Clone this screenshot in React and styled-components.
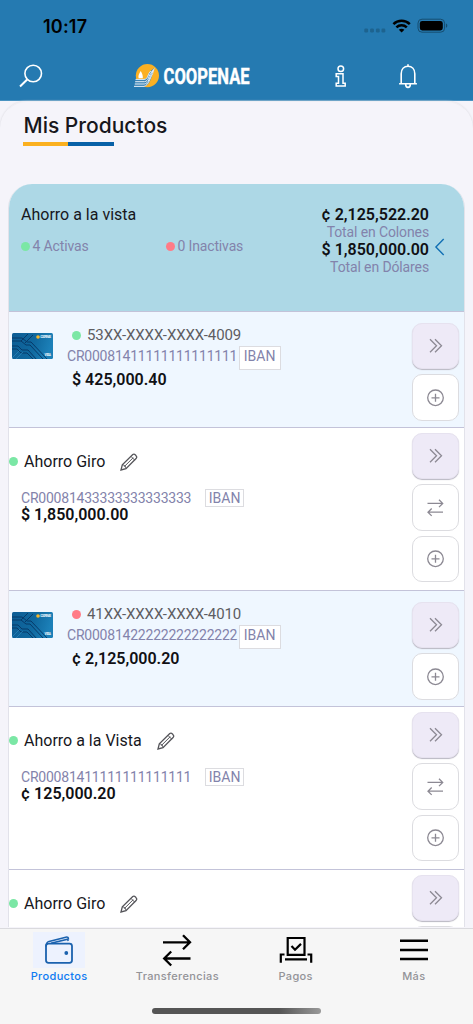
import React, { Fragment } from "react";
import styled, { createGlobalStyle } from "styled-components";

const GlobalStyle = createGlobalStyle`
  * {
    box-sizing: border-box;
  }

  body {
    margin: 0;
    background: #f5f4fa;
    font-family: Roboto, "Liberation Sans", sans-serif;
  }

  svg {
    display: block;
    flex: none;
    overflow: visible;
  }
`;

const Screen = styled.div`
  display: flex;
  flex-direction: column;
  width: 473px;
  height: 1024px;
  overflow: hidden;
  background: #f5f4fa;
`;

const Header = styled.header`
  flex: none;
  height: 101px;
  background: #257ab1;
  border-bottom: 1px solid #4a93c1;
`;

const StatusBar = styled.div`
  display: flex;
  align-items: center;
  justify-content: space-between;
  height: 52px;
  padding: 0 25px 0 43px;
`;

const Clock = styled.span`
  font-family: Inter, sans-serif;
  font-size: 18px;
  font-weight: 600;
  letter-spacing: 0.2px;
  color: #000;
`;

const StatusIcons = styled.div`
  display: flex;
  align-items: center;
`;

const NavBar = styled.div`
  display: grid;
  grid-template-columns: 134px 181px 51px 1fr;
  align-items: center;
  height: 48px;
`;

const NavItem = styled.div`
  padding-left: ${props => props.$left || 0}px;
`;

const Main = styled.main`
  flex: 1;
  min-height: 0;
  overflow: hidden;
  padding: 0 9px;
  border: 1px solid transparent;
  border-top-color: #f0eff4;
  border-radius: 27px 27px 0 0;
  box-shadow: 0 0 2px #d4d4da;
`;

const Title = styled.h1`
  margin: 0 0 0 13.5px;
  padding-top: 10px;
  font-family: Inter, sans-serif;
  font-size: 21px;
  font-weight: 500;
  line-height: 28px;
  color: #17171c;
`;

const Underline = styled.div`
  width: 91px;
  height: 3.5px;
  margin: 2px 0 38.5px 13px;
  background: linear-gradient(90deg, #fbb01f 50%, #0861a7 50%);
`;

const List = styled.section`
  width: 457px;
  margin-left: -2px;
  border: 1px solid #e2e2ea;
  border-top: 0;
  border-radius: 24px 24px 0 0;
  overflow: hidden;
  background: #fff;
`;

const Summary = styled.div`
  display: flex;
  height: 127px;
  padding: 20px 19px 0 12px;
  background: #add8e6;
`;

const SummaryInfo = styled.div`
  flex: 1;
`;

const Name = styled.div`
  font-size: 16px;
  line-height: 20px;
  color: #17171c;
`;

const SummaryName = styled(Name)`
  padding-top: 1px;
`;

const Counters = styled.div`
  display: grid;
  grid-template-columns: 145px 1fr;
  margin-top: 12px;
`;

const Counter = styled.div`
  display: flex;
  align-items: center;
  gap: 2.5px;
  font-size: 14px;
  line-height: 18px;
  letter-spacing: -0.15px;
  color: #8383ab;
`;

const Dot = styled.i`
  flex: none;
  width: 9px;
  height: 9px;
  border-radius: 50%;
  background: ${props => (props.$off ? "#ff7b87" : "#7be7a5")};
`;

const Totals = styled.div`
  padding-top: 1px;
  text-align: right;
`;

const Amount = styled.div`
  font-size: 16px;
  font-weight: 600;
  line-height: 19px;
  color: #101014;
`;

const TotalLabel = styled.div`
  font-size: 14px;
  line-height: 16px;
  letter-spacing: -0.12px;
  color: #8383ab;
`;

const Collapse = styled.div`
  padding: 34px 0 0 6px;
`;

const Row = styled.article`
  display: flex;
  justify-content: space-between;
  height: ${props => (props.$card ? 116 : 163)}px;
  padding-right: 5px;
  border-top: 1px solid #c3c3d9;
  background: ${props => (props.$card ? "#eff7ff" : "#fff")};
`;

const CardInfo = styled.div`
  display: flex;
  padding: 13px 0 0 3px;
`;

const CardPicture = styled.div`
  padding-top: 8px;
  width: 55px;
`;

const CardNumber = styled.div`
  display: flex;
  align-items: center;
  gap: 6px;
  padding: 1px 0 0 5px;
  font-size: 15px;
  line-height: 19px;
  letter-spacing: -0.1px;
  color: #5d5d62;
`;

const CardAmount = styled(Amount)`
  padding-left: 5px;
`;

const IbanLine = styled.div`
  display: flex;
  gap: ${props => props.$gap}px;
  font-size: 14px;
  line-height: ${props => (props.$card ? 23 : 18)}px;
  letter-spacing: -0.22px;
  color: #8383ab;
`;

const IbanTag = styled.span`
  width: ${props => (props.$card ? 42 : 39)}px;
  height: ${props => (props.$card ? 24 : 18)}px;
  margin-top: ${props => (props.$card ? 1 : 0)}px;
  padding-left: ${props => (props.$card ? 3.5 : 2.5)}px;
  border: 1px solid #dcdce0;
  background: #fff;
  line-height: ${props => (props.$card ? 19 : 16)}px;
  letter-spacing: 0;
`;

const AccountInfo = styled.div`
  padding-top: 23px;
`;

const AccountName = styled.div`
  display: flex;
  align-items: center;
  gap: 6px;
  height: 21px;
  margin-bottom: 17px;
`;

const Pencil = styled.div`
  margin-left: 9px;
`;

const AccountDetail = styled.div`
  padding-left: 12px;
`;

const AccountAmount = styled(Amount)`
  margin-top: -2px;
`;

const Actions = styled.div`
  display: flex;
  flex-direction: column;
  gap: 5px;
  padding-top: ${props => (props.$card ? 11 : 5)}px;
`;

const ActionButton = styled.button`
  display: flex;
  flex: none;
  align-items: center;
  justify-content: center;
  width: 47px;
  height: 46.4px;
  padding: 0;
  border: 1px solid ${props => (props.$main ? "#e6e2ef" : "#dcdce0")};
  border-radius: 10px;
  background: ${props => (props.$main ? "#eeeaf7" : "#fff")};
  box-shadow: ${props => (props.$main ? "0 1px 1px #b9b7c2" : "none")};
`;

const TabBar = styled.nav`
  position: relative;
  z-index: 1;
  flex: none;
  height: 96px;
  border-top: 1px solid #dadade;
  background: #f6f6f6;
`;

const Tabs = styled.div`
  display: grid;
  grid-template-columns: repeat(4, 1fr);
  height: 79px;
  padding-top: 3px;
`;

const Tab = styled.div`
  display: flex;
  flex-direction: column;
  align-items: center;
  font-family: Inter, sans-serif;
  font-size: 11px;
  font-weight: 500;
  line-height: 16px;
  letter-spacing: 0.35px;
  color: ${props => (props.$active ? "#0f7bf2" : "#939398")};
`;

const TabIcon = styled.div`
  display: flex;
  align-items: center;
  justify-content: center;
  width: 52px;
  height: 36px;
  background: ${props => (props.$active ? "#edf2fe" : "transparent")};
`;

const HomeIndicator = styled.div`
  width: 169px;
  height: 6px;
  margin: 0 auto;
  border-radius: 3px;
  background: linear-gradient(90deg, #555 75%, #999);
`;

const SearchIcon = () => (
  <svg width="24" height="24" viewBox="0 0 24 24" fill="none" stroke="#fff" strokeWidth="1.6">
    <circle cx="14.2" cy="9.5" r="8.3" />
    <path d="M8.2 15.5 1 22.5" strokeWidth="2" />
  </svg>
);

const Logo = () => (
  <svg width="118" height="26" viewBox="0 0 118 26">
    <circle cx="13.4" cy="12.6" r="11.6" fill="#fbb022" />
    <path d="M6.7 8C5 11 4 12.5 4.6 15.2h4.2C9.2 12.5 7.8 10 6.7 8Z" fill="#fff" />
    <path d="M1.6 16H11c3.5-.8 3-6 5.8-8.2L20.5 5c-2 4-2.5 9-4 12-1.5 3.5-4 6.5-7 6.5H0Z" fill="#3b83b5" />
    <path
      d="M1.6 16.4H10c4.4 0 3.6-5.8 6.8-8.4M1.2 18.7h9.3c4.5-.5 3.8-6.4 7-9.4M.8 21h9.5c4.7-.6 5-7 7.8-11M0 23.4h10c4.8-1.2 6-8.8 8.8-13"
      fill="none"
      stroke="#e4eef5"
      strokeWidth="1"
    />
    <path d="m16.4 9.4 4.4-4.6-1.6 5.2Z" fill="#e4eef5" />
    <text
      x="29.6"
      y="20.7"
      fill="#fff"
      stroke="#fff"
      strokeWidth="0.4"
      fontFamily="Roboto, sans-serif"
      fontSize="21.5"
      fontWeight="700"
      textLength="86"
      lengthAdjust="spacingAndGlyphs"
    >
      COOPENAE
    </text>
  </svg>
);

const InfoIcon = () => (
  <svg width="12" height="24" viewBox="0 0 12 24" fill="none" stroke="#fff" strokeWidth="1.5">
    <circle cx="5.8" cy="4.7" r="2.8" />
    <path d="M1.2 9.8H8v9.5h2.2V22H1.2v-2.7h2.3v-6.8H1.2Z" />
  </svg>
);

const BellIcon = () => (
  <svg width="20" height="26" viewBox="0 0 20 26" fill="none" stroke="#fff" strokeWidth="1.6">
    <path d="M3.2 20.6V10.8C3.2 6 6 3.2 10 3.2s6.8 2.8 6.8 7.6v9.8M1.1 20.8h17.8M10 1.3v2M7.7 21.5c0 3.8 4.6 3.8 4.6 0" />
  </svg>
);

const SignalIcon = () => (
  <svg width="26" height="14" viewBox="0 0 26 14" fill="#1d638f">
    {[1.2, 7, 12.8, 18.4].map(x => (
      <rect key={x} x={x - 1.9} y="9.6" width="3.8" height="3.8" rx="1.2" />
    ))}
  </svg>
);

const WifiIcon = () => (
  <svg width="26" height="16" viewBox="0 0 26 16" fill="none" stroke="#000" strokeWidth="2.5">
    <path d="M2.4 6.2c4.6-4.5 11.8-4.5 16.4 0M5.4 9.4c2.9-2.8 7.5-2.8 10.4 0" />
    <path d="m10.6 14.6 2.8-2.9c-1.5-1.4-4.1-1.4-5.6 0Z" fill="#000" stroke="none" />
  </svg>
);

const BatteryIcon = () => (
  <svg width="31" height="16" viewBox="0 0 31 16">
    <rect x="1" y="1.2" width="26.6" height="13" rx="4" fill="none" stroke="#164d70" />
    <rect x="2.8" y="3" width="23" height="9.4" rx="2.4" />
    <path d="M29 5.5c1.8.7 1.8 3.6 0 4.3Z" fill="#164d70" />
  </svg>
);

const BankCard = () => (
  <svg width="41" height="26" viewBox="0 0 41 26">
    <defs>
      <linearGradient id="bank-card" x2="1" y2=".2">
        <stop stopColor="#0d5c94" />
        <stop offset=".6" stopColor="#10699f" />
        <stop offset="1" stopColor="#1c80b8" />
      </linearGradient>
      <clipPath id="card-edge">
        <rect width="41" height="26" rx="1.5" />
      </clipPath>
    </defs>
    <g clipPath="url(#card-edge)">
      <rect width="41" height="26" fill="url(#bank-card)" />
      <g fill="none" stroke="#073a69" strokeWidth="1">
        <path d="M0 5h10l5 4h4l17 18M0 8h9l5 4h4l13 14M16 1 9 8M21 2l-8 8M0 13h6l4 4h6l9 10M0 16h5l4 4h6l6 6" />
        <path d="m0 25 8-8M4 26l7-7" stroke="#2b86ba" strokeWidth=".7" />
      </g>
    </g>
    <circle cx="26" cy="4" r="1.8" fill="#f5b72b" />
    <text x="28.2" y="5.2" fill="#dcecf5" fontSize="3.3" fontWeight="700" textLength="11">COOPENAE</text>
    <text x="32.5" y="23" fill="#fff" fontSize="3.2" fontWeight="700" textLength="6.5">VISA</text>
  </svg>
);

const ChevronIcon = () => (
  <svg width="10" height="18" viewBox="0 0 10 18" fill="none" stroke="#1270b4" strokeWidth="1.4">
    <path d="M8.7 1 .9 9l7.8 8" />
  </svg>
);

const PencilIcon = () => (
  <svg width="18" height="18" viewBox="0 0 18 18" fill="none" stroke="#55555a" strokeWidth="1.3">
    <path d="m1 17 1.3-5.2L12.8 1.6c1.6-1.4 5 1.7 3.5 3.6L6 15.6Z" />
    <path d="M2.3 11.8c2.2.2 3.5 1.5 3.7 3.8M11 3.4l3.7 3.7M4.2 13.7l9-9" strokeWidth="1" />
  </svg>
);

const actionIcons = {
  open: "M6.5 5.5 13 12l-6.5 6.5M11.5 5.5 18 12l-6.5 6.5",
  add: "M12 8v8M8 12h8",
  transfer: "M4 7.6H19M15.5 3.9 19.2 7.6l-3.7 3.7M19.5 16.4H4.5M8.2 12.7l-3.7 3.7 3.7 3.7",
};

const ActionIcon = ({ name }) => (
  <svg width="24" height="24" viewBox="0.5 0.2 24 24" fill="none" stroke="#8c8993" strokeWidth="1.3">
    {name === "add" && <circle cx="12" cy="12" r="7.8" />}
    <path d={actionIcons[name]} />
  </svg>
);

const WalletIcon = () => (
  <svg width="30" height="30" viewBox="0 0 30 30" fill="none" stroke="#1b62ae" strokeWidth="1.8">
    <rect x="2" y="8.6" width="26" height="19.2" rx="2.5" />
    <path d="M2 11.5C2 8 3 7 5 6.4l16.8-4.2c2-.4 2.7.2 2.7 2.2M7 8.2 23.6 4.2l.6 1.8" strokeWidth="1.5" />
    <circle cx="22.3" cy="18" r="1" fill="#1b62ae" />
  </svg>
);

const TransferIcon = () => (
  <svg width="30" height="32" viewBox="0 0 30 32" fill="none" stroke="#000" strokeWidth="2.3">
    <path d="M1 8.3h27M21 1.3l7 7-7 7M28.5 24.5H2M9.2 17.5l-7 7 7 7" />
  </svg>
);

const PaymentIcon = () => (
  <svg width="34" height="28" viewBox="0 0 34 28" fill="none" stroke="#000" strokeWidth="2.2">
    <path d="M8.7 2h16.8v16.8H8.7ZM12.5 10l3.5 3.7 6-5.8M5.5 18.5H1.8v8.2M28.5 18.5h3.7v8.2M6 23.3h22" />
  </svg>
);

const MenuIcon = () => (
  <svg width="28" height="24" viewBox="0 0 28 24" stroke="#000" strokeWidth="2.5">
    <path d="M0 2.8h28M0 12h28M0 21h28" />
  </svg>
);

const products = [
  { card: true, name: "53XX-XXXX-XXXX-4009", iban: "CR00081411111111111111", amount: "$ 425,000.40" },
  { name: "Ahorro Giro", iban: "CR00081433333333333333", amount: "$ 1,850,000.00" },
  { card: true, off: true, name: "41XX-XXXX-XXXX-4010", iban: "CR00081422222222222222", amount: "¢ 2,125,000.20" },
  { name: "Ahorro a la Vista", iban: "CR00081411111111111111", amount: "¢ 125,000.20" },
  { name: "Ahorro Giro" },
];

const tabs = [
  { label: "Productos", icon: <WalletIcon />, active: true },
  { label: "Transferencias", icon: <TransferIcon /> },
  { label: "Pagos", icon: <PaymentIcon /> },
  { label: "Más", icon: <MenuIcon /> },
];

function Product({ card, off, name, iban, amount }) {
  const actions = card ? ["open", "add"] : ["open", "transfer", "add"];

  return (
    <Row $card={card}>
      {card ? (
        <CardInfo>
          <CardPicture>
            <BankCard />
          </CardPicture>
          <div>
            <CardNumber>
              <Dot $off={off} />
              {name}
            </CardNumber>
            <IbanLine $card $gap={2}>
              {iban}
              <IbanTag $card>IBAN</IbanTag>
            </IbanLine>
            <CardAmount>{amount}</CardAmount>
          </div>
        </CardInfo>
      ) : (
        <AccountInfo>
          <AccountName>
            <Dot $off={off} />
            <Name>{name}</Name>
            <Pencil>
              <PencilIcon />
            </Pencil>
          </AccountName>
          {iban && (
            <AccountDetail>
              <IbanLine $gap={14}>
                {iban}
                <IbanTag>IBAN</IbanTag>
              </IbanLine>
              <AccountAmount>{amount}</AccountAmount>
            </AccountDetail>
          )}
        </AccountInfo>
      )}
      <Actions $card={card}>
        {actions.map(action => (
          <ActionButton key={action} $main={action === "open"}>
            <ActionIcon name={action} />
          </ActionButton>
        ))}
      </Actions>
    </Row>
  );
}

function App() {
  return (
    <Fragment>
      <GlobalStyle />
      <Screen>
        <Header>
          <StatusBar>
            <Clock>10:17</Clock>
            <StatusIcons>
              <SignalIcon />
              <WifiIcon />
              <BatteryIcon />
            </StatusIcons>
          </StatusBar>
          <NavBar>
            <NavItem $left={19}>
              <SearchIcon />
            </NavItem>
            <NavItem>
              <Logo />
            </NavItem>
            <NavItem $left={20}>
              <InfoIcon />
            </NavItem>
            <NavItem $left={32}>
              <BellIcon />
            </NavItem>
          </NavBar>
        </Header>
        <Main>
          <Title>Mis Productos</Title>
          <Underline />
          <List>
            <Summary>
              <SummaryInfo>
                <SummaryName>Ahorro a la vista</SummaryName>
                <Counters>
                  <Counter>
                    <Dot />4 Activas
                  </Counter>
                  <Counter>
                    <Dot $off />0 Inactivas
                  </Counter>
                </Counters>
              </SummaryInfo>
              <Totals>
                <Amount>¢ 2,125,522.20</Amount>
                <TotalLabel>Total en Colones</TotalLabel>
                <Amount>$ 1,850,000.00</Amount>
                <TotalLabel>Total en Dólares</TotalLabel>
              </Totals>
              <Collapse>
                <ChevronIcon />
              </Collapse>
            </Summary>
            {products.map((product, index) => (
              <Product key={index} {...product} />
            ))}
          </List>
        </Main>
        <TabBar>
          <Tabs>
            {tabs.map(tab => (
              <Tab key={tab.label} $active={tab.active}>
                <TabIcon $active={tab.active}>{tab.icon}</TabIcon>
                {tab.label}
              </Tab>
            ))}
          </Tabs>
          <HomeIndicator />
        </TabBar>
      </Screen>
    </Fragment>
  );
}

export default App;
